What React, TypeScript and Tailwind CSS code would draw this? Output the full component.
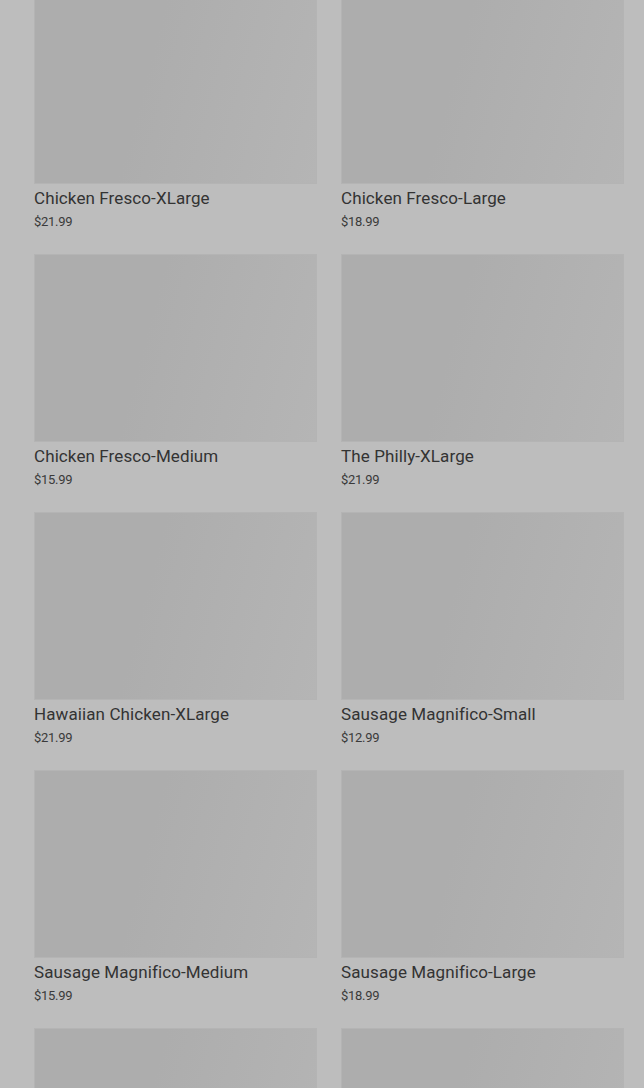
const items = [
  { name: "Chicken Fresco-XLarge", price: "$21.99" },
  { name: "Chicken Fresco-Large", price: "$18.99" },
  { name: "Chicken Fresco-Medium", price: "$15.99" },
  { name: "The Philly-XLarge", price: "$21.99" },
  { name: "Hawaiian Chicken-XLarge", price: "$21.99" },
  { name: "Sausage Magnifico-Small", price: "$12.99" },
  { name: "Sausage Magnifico-Medium", price: "$15.99" },
  { name: "Sausage Magnifico-Large", price: "$18.99" },
  { name: "", price: "" },
  { name: "", price: "" },
];

export default function App() {
  return (
    <div className="h-[1088px] overflow-hidden bg-[#bdbdbd] font-['Roboto',sans-serif]">
      <div className="-mt-[4px] grid grid-cols-[283px_283px] gap-x-[24px] gap-y-[22px] pl-[34px]">
        {items.map((it, i) => (
          <div key={i} className="flex flex-col">
            <div className="h-[188px] border border-[#b4b4b4] bg-[linear-gradient(105deg,#adadad_40%,#b5b5b5_100%)]" />
            {it.name && (
              <>
                <div className="mt-[2px] text-[17px] font-normal leading-[24px] tracking-[0.1px] text-[#333333]">{it.name}</div>
                <div className="mt-[2px] text-[13px] leading-[20px] tracking-[-0.3px] text-[#3a3a3a]">{it.price}</div>
              </>
            )}
          </div>
        ))}
      </div>
    </div>
  );
}
